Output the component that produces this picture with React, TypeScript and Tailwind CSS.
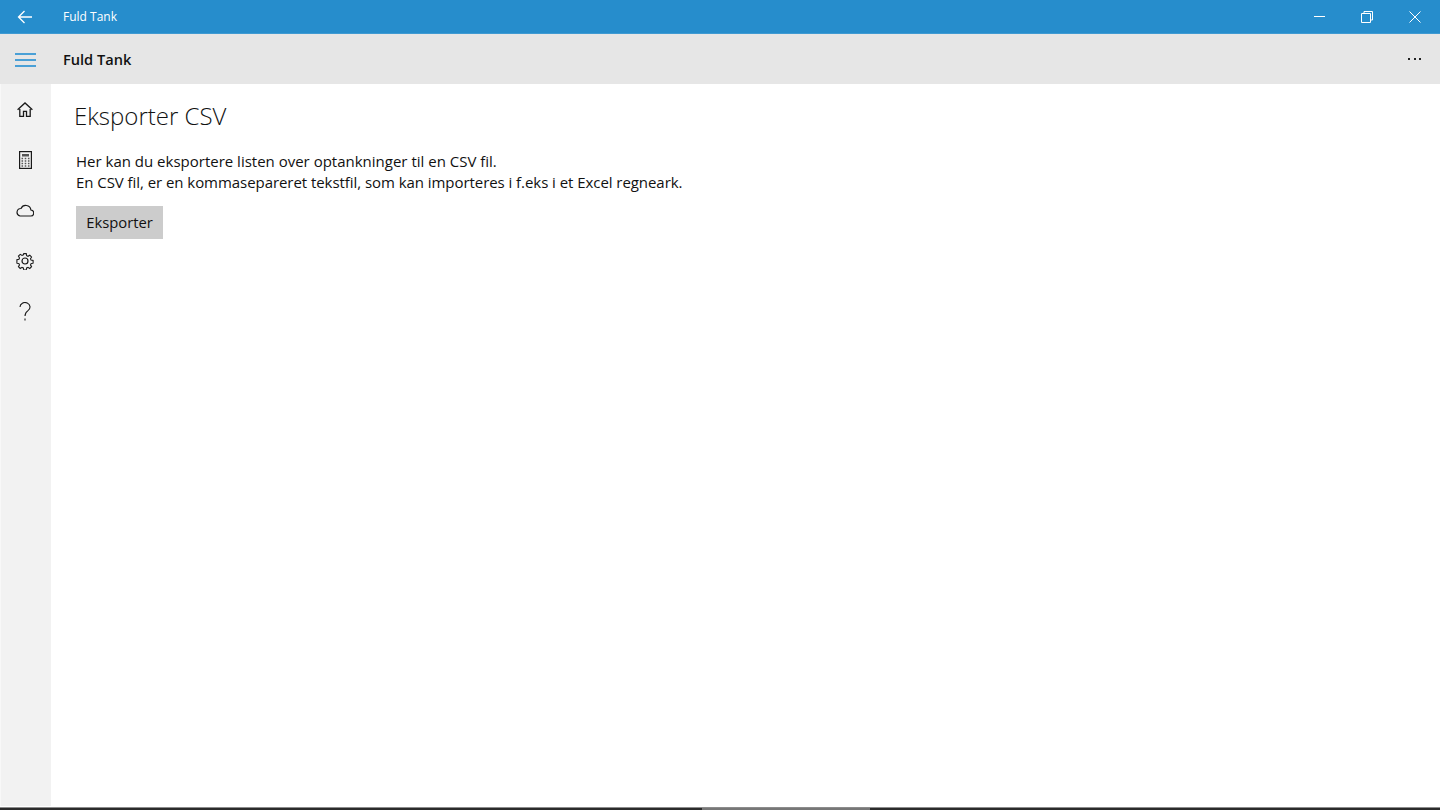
import React from "react";

const font = "font-['Open_Sans','Noto_Sans',sans-serif]";

function NavIcon({ children }: { children: React.ReactNode }) {
  return <div className="h-[50.5px] flex items-center justify-center">{children}</div>;
}

function App() {
  return (
    <div className={`w-[1440px] h-[810px] flex flex-col overflow-hidden bg-white ${font}`}>
      <div className="h-[34px] bg-[#268dcc] border-b border-[#3f9ad2] flex items-center text-white">
        <div className="w-[50px] flex justify-center">
          <svg width="16" height="14" viewBox="0 0 16 14" fill="none" stroke="white" strokeWidth="1.3">
            <path d="M15 7H1.500M7.500 1 1.500 7l6 6" />
          </svg>
        </div>
        <span className="ml-[13px] text-[12px]">Fuld Tank</span>
        <div className="ml-auto pr-[1px] flex items-center">
          <div className="w-12 flex justify-center">
            <div className="w-[11px] h-px bg-white" />
          </div>
          <div className="w-12 flex justify-center">
            <svg width="12" height="12" viewBox="0 0 12 12" fill="none" stroke="white" strokeWidth="1">
              <path d="M3 2.500V.5h8.500V9H9.500" />
              <path d="M.5 2.500h9v9h-9z" />
            </svg>
          </div>
          <div className="w-12 flex justify-center">
            <svg width="12" height="12" viewBox="0 0 12 12" fill="none" stroke="white" strokeWidth="1">
              <path d="M.5.5l11 11M11.500.5l-11 11" />
            </svg>
          </div>
        </div>
      </div>

      <div className="h-[50px] bg-[#e6e6e6] flex items-center">
        <div className="w-[51px] flex justify-center">
          <div className="w-[21px] mt-[2px] flex flex-col gap-[4px]">
            <div className="h-[2px] bg-[#4aa0d6]" />
            <div className="h-[2px] bg-[#4aa0d6]" />
            <div className="h-[2px] bg-[#4aa0d6]" />
          </div>
        </div>
        <span className="ml-3 mt-[2px] text-[14.6px] font-semibold text-[#111]">Fuld Tank</span>
        <div className="ml-auto w-[51px] flex justify-center gap-[3.5px]">
          <div className="w-[2px] h-[2px] bg-[#222]" />
          <div className="w-[2px] h-[2px] bg-[#222]" />
          <div className="w-[2px] h-[2px] bg-[#222]" />
        </div>
      </div>

      <div className="flex-1 flex min-h-0">
        <div className="w-[51px] mb-[1px] bg-[#f2f2f2] border-l border-[#f8f8f8] pr-[2px]">
          <NavIcon>
            <svg width="16" height="15" viewBox="0 0 16 15" fill="none" stroke="#1a1a1a" strokeWidth="1.3">
              <path d="M.6 7.800 8 .9l7.400 6.900M2.800 5.600v8.700h3.700V9.300h3v5h3.700V5.600" />
            </svg>
          </NavIcon>
          <NavIcon>
            <svg width="13" height="18" viewBox="0 0 13 18" fill="none">
              <rect x=".6" y=".6" width="11.800" height="16.800" stroke="#1a1a1a" strokeWidth="1.200" />
              <rect x="3" y="3" width="7" height="2.500" fill="#555" />
              <path d="M2.500 7.500h8M2.500 10h8M2.500 12.500h8M2.500 15h8" stroke="#555" strokeWidth="1.500" strokeDasharray="1.600 1.600" />
            </svg>
          </NavIcon>
          <NavIcon>
            <svg width="18" height="13" viewBox="0 0 18 13" fill="none" stroke="#1a1a1a" strokeWidth="1.200">
              <path d="M4 12h10.500a3 3 0 0 0 .4-6A5.200 5.200 0 0 0 5 4.500 3.800 3.800 0 0 0 4 12z" />
            </svg>
          </NavIcon>
          <NavIcon>
            <svg width="18" height="18" viewBox="0 0 18 18" fill="none" stroke="#1a1a1a" strokeWidth="1.200">
              <circle cx="9" cy="9" r="3" />
              <path d="M7.600.8h2.800l.4 2.300 1.500.7 2-1.200 2 2-1.200 2 .6 1.400 2.300.5v2.900l-2.300.5-.6 1.400 1.200 2-2 2-2-1.200-1.500.6-.4 2.300H7.600l-.4-2.300-1.500-.6-2 1.200-2-2 1.200-2-.6-1.400-2.300-.5V7.500l2.300-.5.6-1.400-1.200-2 2-2 2 1.200 1.500-.7z" transform="translate(.9 .9) scale(.9)" />
            </svg>
          </NavIcon>
          <NavIcon>
            <svg className="mt-[1px]" width="12" height="19" viewBox="0 0 12 19" fill="none" stroke="#1a1a1a" strokeWidth="1.100">
              <path d="M1 5a5 4.500 0 1 1 8 3.600C7 10 6 11 6 14" />
              <path d="M6 16.500v2" />
            </svg>
          </NavIcon>
        </div>

        <div className="flex-1 pl-[23px] pt-[14px]">
          <h1 className="text-[24px] leading-[36px] text-[#111] font-light">Eksporter CSV</h1>
          <div className="ml-[2px] mt-[17px] text-[15px] leading-[21px] text-[#111]">
            <p>Her kan du eksportere listen over optankninger til en CSV fil.</p>
            <p className="tracking-[-0.055px]">En CSV fil, er en kommasepareret tekstfil, som kan importeres i f.eks i et Excel regneark.</p>
          </div>
          <button className="ml-[2px] mt-[13px] w-[87px] h-[33px] bg-[#cccccc] text-[14.8px] text-[#111]">Eksporter</button>
        </div>
      </div>

      <div className="h-[3px] bg-[#2b2b2b] border-t border-[#8c8c8c] flex">
        <div className="ml-[702px] w-[168px] h-full bg-[#777]" />
      </div>
    </div>
  );
}

export default App;
